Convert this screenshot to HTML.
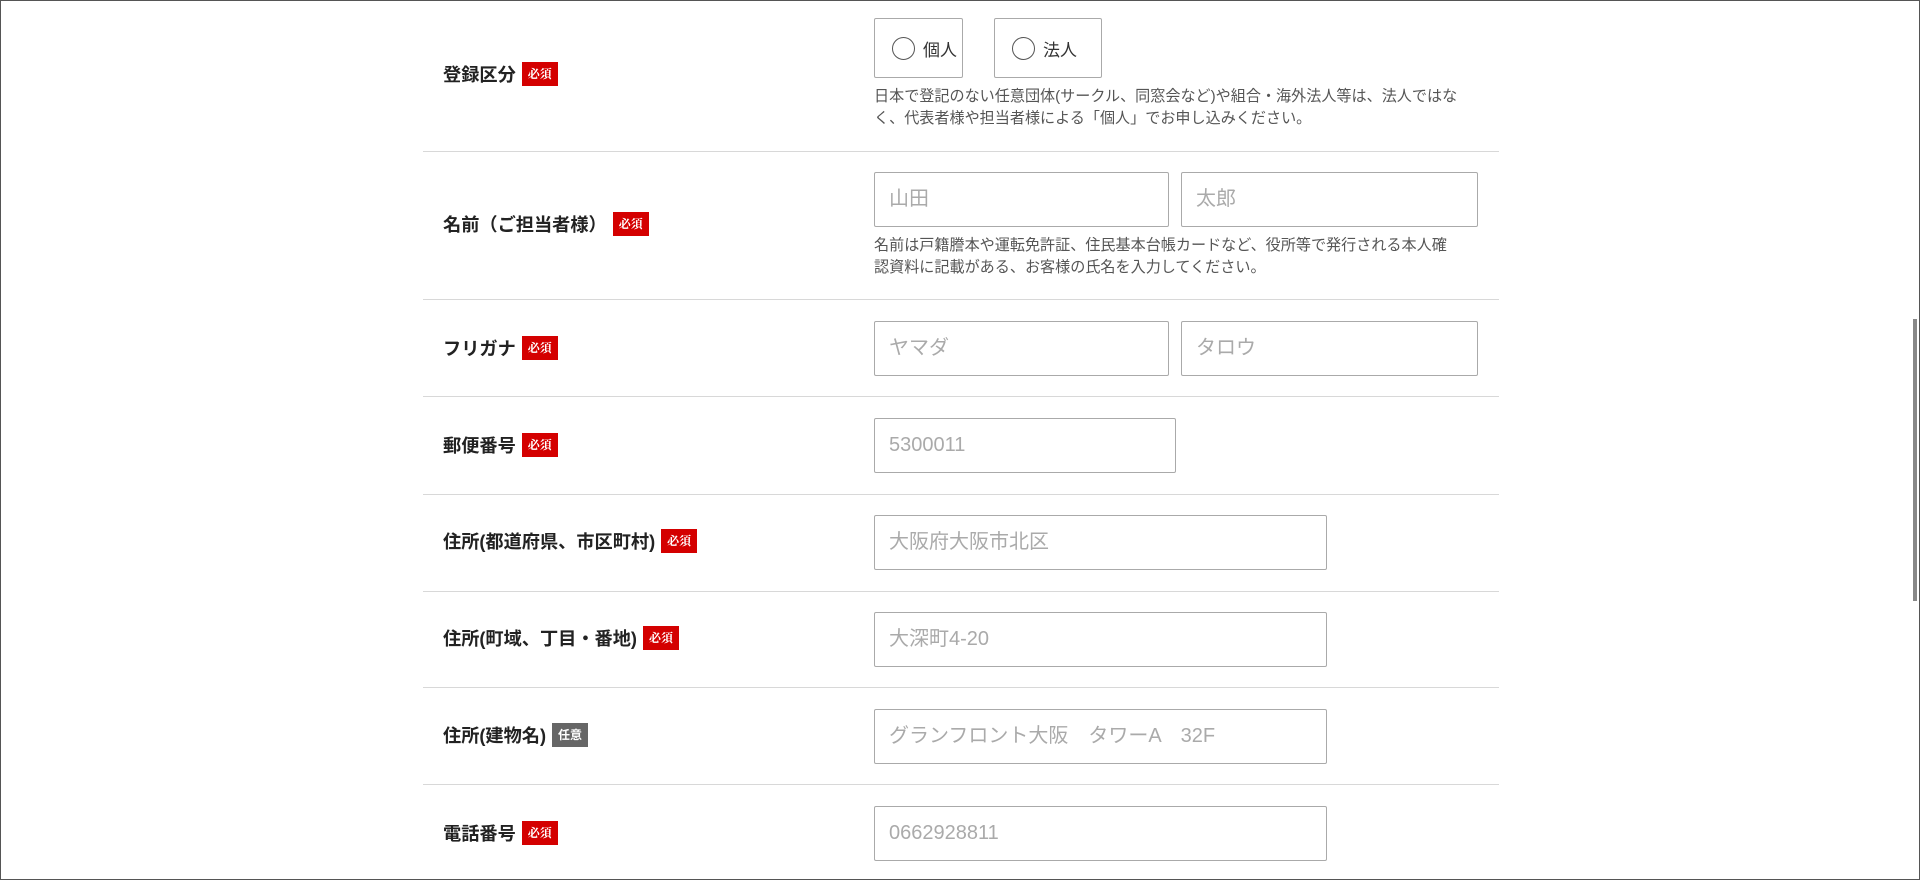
<!DOCTYPE html>
<html><head><meta charset="utf-8"><style>
*{box-sizing:border-box;margin:0;padding:0}
html,body{width:1920px;height:880px;overflow:hidden;background:#fff}
body{font-family:"Liberation Sans","Noto Sans CJK JP",sans-serif;position:relative;border:1px solid #555}
.abs{position:absolute}
.line{position:absolute;left:422px;width:1076px;height:1px;background:#d8d8d8}
.lab{position:absolute;left:442px;font-size:18.2px;font-weight:bold;color:#222;display:flex;align-items:center;height:24px;transform:translateY(-14px)}
.b{display:inline-block;background:#d40000;color:#fff;font-size:12px;font-weight:bold;width:36px;height:24px;line-height:24px;text-align:center;margin-left:6px;font-family:"Noto Serif CJK SC",serif}
.b.g{background:#666;font-family:"Noto Sans CJK JP",sans-serif}
.in{position:absolute;border:1px solid #aaa;border-radius:2px;height:55px;font-size:20px;color:#aaa;padding-left:14px;line-height:53px}
.hint{position:absolute;left:873px;font-size:15.1px;color:#555;line-height:22px}
.rad{position:absolute;top:17px;height:60px;border:1px solid #aaa;border-radius:2px;font-size:17px;color:#333;display:flex;align-items:center;padding-left:17px}
.rad i{width:23px;height:23px;border:1px solid #555;border-radius:50%;margin-right:8px;display:inline-block}
</style></head><body>
<div class="rad" style="left:873px;width:89px"><i></i>個人</div>
<div class="rad" style="left:993px;width:108px"><i></i>法人</div>
<div class="hint" style="top:85px">日本で登記のない任意団体(サークル、同窓会など)や組合・海外法人等は、法人ではな<br>く、代表者様や担当者様による「個人」でお申し込みください。</div>
<div class="lab" style="top:75px">登録区分<span class="b">必須</span></div>
<div class="line" style="top:150px"></div>
<div class="lab" style="top:225px">名前（ご担当者様）<span class="b">必須</span></div>
<div class="in" style="left:873px;top:171px;width:295px">山田</div>
<div class="in" style="left:1180px;top:171px;width:297px">太郎</div>
<div class="hint" style="top:234px">名前は戸籍謄本や運転免許証、住民基本台帳カードなど、役所等で発行される本人確<br>認資料に記載がある、お客様の氏名を入力してください。</div>
<div class="line" style="top:298px"></div>
<div class="lab" style="top:349px">フリガナ<span class="b">必須</span></div>
<div class="in" style="left:873px;top:320px;width:295px">ヤマダ</div>
<div class="in" style="left:1180px;top:320px;width:297px">タロウ</div>
<div class="line" style="top:395px"></div>
<div class="lab" style="top:446px">郵便番号<span class="b">必須</span></div>
<div class="in" style="left:873px;top:417px;width:302px">5300011</div>
<div class="line" style="top:493px"></div>
<div class="lab" style="top:542px">住所(都道府県、市区町村)<span class="b">必須</span></div>
<div class="in" style="left:873px;top:514px;width:453px">大阪府大阪市北区</div>
<div class="line" style="top:590px"></div>
<div class="lab" style="top:639px">住所(町域、丁目・番地)<span class="b">必須</span></div>
<div class="in" style="left:873px;top:611px;width:453px">大深町4-20</div>
<div class="line" style="top:686px"></div>
<div class="lab" style="top:736px">住所(建物名)<span class="b g">任意</span></div>
<div class="in" style="left:873px;top:708px;width:453px">グランフロント大阪　タワーA　32F</div>
<div class="line" style="top:783px"></div>
<div class="lab" style="top:834px">電話番号<span class="b">必須</span></div>
<div class="in" style="left:873px;top:805px;width:453px">0662928811</div>
<div class="abs" style="left:1912px;top:318px;width:4px;height:282px;background:#888"></div>
</body></html>
